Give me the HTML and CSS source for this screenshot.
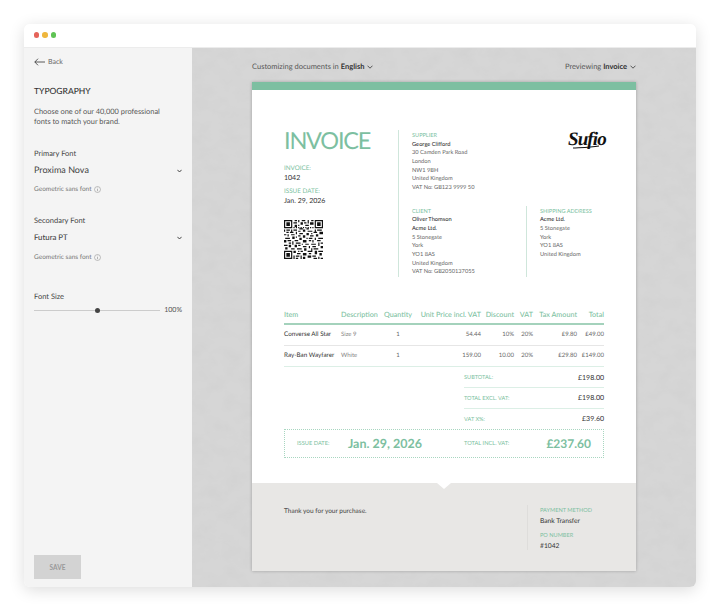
FILE: index.html
```html
<!DOCTYPE html>
<html lang="en">
<head>
<meta charset="utf-8">
<title>Typography</title>
<link rel="stylesheet" href="styles.css">
</head>
<body>
<div class="window">
  <div class="titlebar">
    <span class="dot dot-red"></span><span class="dot dot-yellow"></span><span class="dot dot-green"></span>
  </div>
  <div class="app">
    <aside class="sidebar">
      <a class="back">
        <svg class="back-arrow" width="11" height="8" viewBox="0 0 11 8"><path d="M11 4H.8M4 .7.8 4 4 7.3" fill="none" stroke="#333" stroke-width=".8"/></svg>
        Back
      </a>
      <h2 class="side-title">TYPOGRAPHY</h2>
      <p class="side-desc">Choose one of our 40,000 professional fonts to match your brand.</p>

      <div class="font-field field-primary">
        <div class="field-label">Primary Font</div>
        <div class="select"><span>Proxima Nova</span><svg class="chev" width="5" height="4" viewBox="0 0 5 4"><path d="M.4.8 2.5 3 4.6.8" fill="none" stroke="#333" stroke-width=".9"/></svg></div>
        <div class="hint">Geometric sans font <svg class="info" width="7" height="7" viewBox="0 0 7 7"><circle cx="3.5" cy="3.5" r="3" fill="none" stroke="#888" stroke-width=".5"/><path d="M3.5 3v2.2M3.5 1.700v.6" stroke="#888" stroke-width=".6"/></svg></div>
      </div>
      <div class="font-field field-secondary">
        <div class="field-label">Secondary Font</div>
        <div class="select select-futura"><span>Futura PT</span><svg class="chev" width="5" height="4" viewBox="0 0 5 4"><path d="M.4.8 2.5 3 4.6.8" fill="none" stroke="#333" stroke-width=".9"/></svg></div>
        <div class="hint">Geometric sans font <svg class="info" width="7" height="7" viewBox="0 0 7 7"><circle cx="3.5" cy="3.5" r="3" fill="none" stroke="#888" stroke-width=".5"/><path d="M3.5 3v2.2M3.5 1.700v.6" stroke="#888" stroke-width=".6"/></svg></div>
      </div>
      <div class="size-field">
        <div class="field-label">Font Size</div>
        <div class="slider-row">
          <div class="slider"><span class="thumb"></span></div>
          <span class="slider-value">100%</span>
        </div>
      </div>
      <button class="save" type="button">SAVE</button>
    </aside>

    <main class="stage">
      <div class="stage-bar">
        <div>Customizing documents in <b>English</b> <svg class="chev-s" width="6" height="4" viewBox="0 0 6 4"><path d="M.5.7 3 3.200 5.500.7" fill="none" stroke="#333" stroke-width=".8"/></svg></div>
        <div>Previewing <b>Invoice</b> <svg class="chev-s" width="6" height="4" viewBox="0 0 6 4"><path d="M.5.7 3 3.200 5.500.7" fill="none" stroke="#333" stroke-width=".8"/></svg></div>
      </div>

      <article class="doc">
        <div class="doc-top"></div>
        <div class="doc-body">
          <section class="head">
            <div class="head-left">
              <h1 class="invoice-title">INVOICE</h1>
              <div class="meta-label meta-first">INVOICE:</div>
              <div class="meta-value">1042</div>
              <div class="meta-label meta-gap">ISSUE DATE:</div>
              <div class="meta-value">Jan. 29, 2026</div>
              <svg class="qr" viewBox="0 0 33 33" width="39" height="39">
                <path fill-rule="evenodd" fill="#111" d="M0 0h7v7H0zM1 1v5h5V1zM2 2h3v3H2zM26 0h7v7h-7zM27 1v5h5V1zM28 2h3v3h-3zM0 26h7v7H0zM1 27v5h5v-5zM2 28h3v3H2z"/>
                <path fill="#111" d="M9 0h2v1H9zM12 0h1v2h-1zM15 0h3v1h-3zM20 0h1v3h-1zM23 0h2v1h-2zM8 2h3v1H8zM14 2h2v2h-2zM17 2h2v1h-2zM22 2h3v2h-3zM9 4h2v2H9zM12 4h1v1h-1zM18 4h3v1h-3zM8 6h1v1H8zM10 6h1v1h-1zM12 6h1v1h-1zM14 6h1v1h-1zM16 6h1v1h-1zM18 6h1v1h-1zM20 6h1v1h-1zM22 6h1v1h-1zM24 6h1v1h-1zM13 7h3v1h-3zM19 7h2v1h-2zM0 8h1v2H0zM2 8h3v1H2zM6 8h1v2H6zM8 8h3v1H8zM12 9h2v1h-2zM16 8h2v2h-2zM20 9h4v1h-4zM26 8h1v2h-1zM28 8h4v1h-4zM2 10h2v1H2zM5 10h3v1H5zM10 10h1v2h-1zM13 11h3v1h-3zM19 11h2v2h-2zM23 11h1v1h-1zM25 10h3v1h-3zM30 10h3v2h-3zM0 12h2v1H0zM3 12h1v2H3zM6 12h3v1H6zM12 13h2v1h-2zM16 13h2v2h-2zM22 13h3v1h-3zM27 12h2v2h-2zM1 15h4v1H1zM7 14h2v2H7zM10 14h1v1h-1zM13 15h2v2h-2zM19 15h1v1h-1zM21 15h3v1h-3zM26 15h1v2h-1zM29 15h4v1h-4zM0 17h2v2H0zM3 17h3v1H3zM9 17h3v1H9zM16 17h3v2h-3zM21 17h2v1h-2zM24 17h1v2h-1zM28 17h3v1h-3zM4 19h2v1H4zM7 18h1v3H7zM10 19h4v1h-4zM15 20h1v1h-1zM18 20h3v1h-3zM23 20h4v1h-4zM29 19h1v3h-1zM31 19h2v1h-2zM0 21h3v1H0zM4 21h2v2H4zM9 21h2v2H9zM12 21h2v1h-2zM16 22h3v1h-3zM21 22h1v2h-1zM24 22h3v1h-3zM31 22h2v2h-2zM1 23h2v2H1zM6 24h3v1H6zM11 24h4v1h-4zM17 24h2v2h-2zM23 24h1v3h-1zM25 24h4v1h-4zM8 26h2v2H8zM12 26h1v1h-1zM14 26h2v1h-2zM20 26h3v1h-3zM26 26h2v3h-2zM29 26h4v1h-4zM11 28h3v1h-3zM16 28h3v2h-3zM21 28h2v1h-2zM30 28h2v2h-2zM8 30h1v3H8zM10 30h3v1h-3zM14 30h1v3h-1zM20 30h3v2h-3zM24 30h3v1h-3zM10 32h2v1h-2zM16 31h2v2h-2zM25 32h3v1h-3zM29 31h1v2h-1zM31 32h2v1h-2z"/>
              </svg>
            </div>
            <div class="head-right">
              <div class="supplier-row">
                <div class="party">
                  <div class="party-label">SUPPLIER</div>
                  <div class="strong">George Clifford</div>
                  <div>30 Camden Park Road</div>
                  <div>London</div>
                  <div>NW1 9BH</div>
                  <div>United Kingdom</div>
                  <div>VAT No: GB123 9999 50</div>
                </div>
                <div class="logo">Sufio<svg class="logo-swash" width="28" height="4" viewBox="0 0 28 4"><path d="M1 3C8 2.600 18 2.600 27 1" fill="none" stroke="#111" stroke-width="1.100"/></svg></div>
              </div>
              <div class="client-row">
                <div class="party party-client">
                  <div class="party-label">CLIENT</div>
                  <div class="strong">Oliver Thomson</div>
                  <div class="strong">Acme Ltd.</div>
                  <div>5 Stonegate</div>
                  <div>York</div>
                  <div>YO1 8AS</div>
                  <div>United Kingdom</div>
                  <div>VAT No: GB2050137055</div>
                </div>
                <div class="party party-shipping">
                  <div class="party-label">SHIPPING ADDRESS</div>
                  <div class="strong">Acme Ltd.</div>
                  <div>5 Stonegate</div>
                  <div>York</div>
                  <div>YO1 8AS</div>
                  <div>United Kingdom</div>
                </div>
              </div>
            </div>
          </section>

          <table class="items">
            <colgroup>
              <col class="c-item"><col class="c-desc"><col class="c-qty"><col class="c-unit"><col class="c-disc"><col class="c-vat"><col class="c-tax"><col class="c-total">
            </colgroup>
            <thead>
              <tr><th class="l">Item</th><th class="l">Description</th><th class="c">Quantity</th><th class="r">Unit Price incl. VAT</th><th class="r">Discount</th><th class="r">VAT</th><th class="r">Tax Amount</th><th class="r">Total</th></tr>
            </thead>
            <tbody>
              <tr><td class="l name">Converse All Star</td><td class="l muted">Size 9</td><td class="c">1</td><td class="r">54.44</td><td class="r">10%</td><td class="r">20%</td><td class="r">£9.80</td><td class="r">£49.00</td></tr>
              <tr class="last"><td class="l name">Ray-Ban Wayfarer</td><td class="l muted">White</td><td class="c">1</td><td class="r">159.00</td><td class="r">10.00</td><td class="r">20%</td><td class="r">£29.80</td><td class="r">£149.00</td></tr>
            </tbody>
          </table>

          <div class="totals">
            <div class="total-row"><span>SUBTOTAL:</span><b>£198.00</b></div>
            <div class="total-row"><span>TOTAL EXCL. VAT:</span><b>£198.00</b></div>
            <div class="total-row noline"><span>VAT X%:</span><b>£39.60</b></div>
          </div>

          <div class="grand">
            <div class="grand-left"><span class="grand-label">ISSUE DATE:</span><span class="grand-date">Jan. 29, 2026</span></div>
            <div class="grand-right"><span class="grand-label">TOTAL INCL. VAT:</span><span class="grand-sum">£237.60</span></div>
          </div>
        </div>
        <footer class="doc-foot">
          <span class="notch"></span>
          <div class="thanks">Thank you for your purchase.</div>
          <div class="pay">
            <div class="party-label big">PAYMENT METHOD</div>
            <div class="pay-value">Bank Transfer</div>
            <div class="party-label big pay-gap">PO NUMBER</div>
            <div class="pay-value">#1042</div>
          </div>
        </footer>
      </article>
    </main>
  </div>
</div>
</body>
</html>
```
FILE: styles.css
```css
* { box-sizing: border-box; }
html, body { margin: 0; padding: 0; background: #fff; }
body { padding: 24px; font-family: Lato, "Liberation Sans", sans-serif; color: #333; text-rendering: geometricPrecision; }

.window {
  width: 672px; height: 563px; display: flex; flex-direction: column;
  border-radius: 6px; overflow: hidden; background: #fff;
  box-shadow: 0 3px 16px rgba(0,0,0,.14);
}
.titlebar { height: 24px; flex: none; display: flex; align-items: center; gap: 3px; padding: 0 0 1px 9.500px; background: #fff; border-bottom: 1px solid #ececec; }
.dot { width: 5.500px; height: 5.500px; border-radius: 50%; }
.dot-red { background: #e5645a; }
.dot-yellow { background: #efb73e; }
.dot-green { background: #5fc354; }

.app { flex: 1; display: flex; min-height: 0; }

.sidebar { width: 168px; flex: none; background: #f4f4f4; padding: 9px 10px 8px; display: flex; flex-direction: column; }
.back { display: flex; align-items: center; gap: 3px; height: 10px; font-size: 7px; color: #666; }
.side-title { margin: 19px 0 0; font-size: 8.500px; line-height: 11px; font-weight: 500; color: #333; }
.side-desc { margin: 10px 0 0; font-size: 7.400px; line-height: 10px; color: #555; width: 135px; }
.font-field { display: flex; flex-direction: column; }
.field-primary { margin-top: 21.500px; }
.field-secondary { margin-top: 18.500px; }
.field-label { font-size: 7.500px; line-height: 10px; color: #444; }
.select { display: flex; justify-content: space-between; align-items: center; margin-top: 1px; height: 19px; font-size: 9px; color: #444; }
.select-futura { font-size: 7.800px; font-weight: 500; }
.chev { margin-top: 3px; }
.hint { margin-top: 1px; height: 18px; padding-top: 2px; display: flex; align-items: center; gap: 2px; font-size: 6.500px; color: #777; }
.size-field { margin-top: 27px; }
.slider-row { display: flex; align-items: center; justify-content: space-between; margin-top: 3px; height: 10px; }
.slider { position: relative; width: 126px; height: 1px; background: #ccc; }
.thumb { position: absolute; left: 60.500px; top: -2px; width: 5px; height: 5px; border-radius: 50%; background: #444; }
.slider-value { font-size: 7px; color: #555; }
.save { margin-top: auto; width: 47px; height: 24px; border: 0; padding: 0; background: #d3d3d3; color: #999; font: 700 6.500px Lato, sans-serif; }

.stage {
  flex: 1; min-width: 0; padding: 0 60px; display: flex; flex-direction: column;
  background-color: #d6d6d6;
  background-image: url("data:image/svg+xml,%3Csvg xmlns='http://www.w3.org/2000/svg' width='504' height='539'%3E%3Cfilter id='n'%3E%3CfeTurbulence type='fractalNoise' baseFrequency='.06 .08' numOctaves='5' seed='7'/%3E%3CfeColorMatrix values='0 0 0 0 .5 0 0 0 0 .5 0 0 0 0 .5 .25 0 0 0 -.09'/%3E%3C/filter%3E%3Crect width='504' height='539' filter='url(%23n)'/%3E%3C/svg%3E");
}
.stage-bar { height: 34px; flex: none; padding-top: 2px; display: flex; justify-content: space-between; align-items: center; font-size: 7.500px; color: #555; }
.stage-bar b { color: #333; font-weight: 700; }
.chev-s { margin-left: 1px; }

.doc { width: 384px; height: 489px; flex: none; background: #fff; display: flex; flex-direction: column; box-shadow: 0 0 3px rgba(0,0,0,.25); }
.doc-top { height: 8px; flex: none; background: #7dbfa1; }
.doc-body { flex: 1; padding: 40px 32px 0; display: flex; flex-direction: column; }

.head { display: flex; height: 147px; }
.head-left { width: 114px; flex: none; }
.invoice-title { margin: 0; font-size: 23.500px; line-height: 22px; font-weight: 400; color: #7dbfa1; letter-spacing: -1.200px; }
.meta-label { font-size: 6.300px; line-height: 8px; color: #7dbfa1; }
.meta-first { margin-top: 13px; }
.meta-value { font-size: 7px; line-height: 10px; color: #333; }
.meta-gap { margin-top: 5px; }
.qr { display: block; margin-top: 14px; }

.head-right { flex: 1; border-left: 1px solid #cfe6db; display: flex; flex-direction: column; }
.supplier-row { display: flex; justify-content: space-between; height: 76px; padding: 1px 0 0 13px; }
.client-row { display: flex; flex: 1; padding-left: 13px; }
.party { font-size: 5.700px; line-height: 8.670px; color: #666; }
.party-client { width: 114px; padding-top: 1px; }
.party-shipping { flex: 1; border-left: 1px solid #cfe6db; padding: 1px 0 0 13px; }
.party-label { color: #7dbfa1; font-size: 5.600px; line-height: 9.500px; }
.strong { color: #333; font-weight: 500; }
.logo { position: relative; font: italic 700 19px/20px "Liberation Serif", serif; color: #111; letter-spacing: -.9px; width: 36px; margin-top: -1px; }
.logo-swash { position: absolute; left: 4px; top: 15px; }

.items { width: 320px; margin-top: 27px; border-collapse: collapse; table-layout: fixed; }
.c-item { width: 57px; } .c-desc { width: 43px; } .c-qty { width: 28px; } .c-unit { width: 69px; }
.c-disc { width: 33px; } .c-vat { width: 19px; } .c-tax { width: 44px; } .c-total { width: 27px; }
.items th { height: 20px; padding: 2px 0 0; font-size: 7.200px; font-weight: 500; color: #7dbfa1; white-space: nowrap; border-bottom: 2px solid #a4d2bc; }
.items td { height: 21px; padding: 0; font-size: 6px; color: #666; white-space: nowrap; border-bottom: 1px solid #e6e6e6; }
.items .last td { border-bottom-color: #dcefe6; }
.items td.name { color: #333; font-size: 6.300px; }
.items td.muted { color: #888; }
.l { text-align: left; } .c { text-align: center; } .r { text-align: right; }

.totals { margin: 1px 0 0 180px; width: 140px; }
.total-row { height: 20.500px; padding-top: 1px; display: flex; justify-content: space-between; align-items: center; border-bottom: 1px solid #dcefe6; font-size: 5.600px; color: #7dbfa1; }
.total-row b { font-size: 7px; font-weight: 400; color: #333; }
.noline { border-bottom: 0; height: 20px; }

.grand { height: 29px; border: 1px dotted #a8d6c0; display: flex; align-items: center; }
.grand-left { width: 179px; display: flex; align-items: center; padding-left: 12px; }
.grand-right { flex: 1; display: flex; align-items: center; justify-content: space-between; padding-right: 12px; }
.grand-label { font-size: 5.700px; color: #7dbfa1; }
.grand-date { margin-left: 18.500px; font-size: 12.500px; font-weight: 700; color: #7dbfa1; }
.grand-sum { font-size: 12px; font-weight: 700; color: #7dbfa1; }

.doc-foot { position: relative; height: 88px; flex: none; background: #e8e7e5; padding: 22px 32px 0; display: flex; justify-content: space-between; }
.notch { position: absolute; left: 185px; top: 0; border-left: 7px solid transparent; border-right: 7px solid transparent; border-top: 6px solid #fff; }
.thanks { font-size: 6.500px; line-height: 10px; color: #444; padding-top: 1.500px; }
.pay { width: 77px; height: 45px; border-left: 1px solid #dedddb; padding: 1px 0 0 12px; }
.big { font-size: 5.600px; line-height: 10px; }
.pay-value { font-size: 6.700px; line-height: 10px; color: #333; }
.pay-gap { margin-top: 5px; }
```
